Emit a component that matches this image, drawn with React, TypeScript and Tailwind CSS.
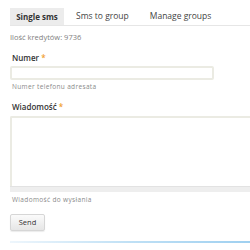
import React from "react";

export default function App() {
  const font = { fontFamily: '"Open Sans", "Noto Sans", "DejaVu Sans", sans-serif' };
  return (
    <div className="w-[250px] h-[250px] overflow-hidden bg-white text-[#444]" style={font}>
      <div className="pl-[10px] pt-[9px]">
        <div className="flex items-end border-b border-[#e6e6e6] h-[17px] whitespace-nowrap">
          <div className="h-[17px] w-[54px] bg-[#ececec] flex items-center justify-center text-[8px] font-bold text-[#333]">
            Single sms
          </div>
          <div className="h-[17px] pl-[12px] flex items-center text-[8.5px] text-[#444]">
            Sms to group
          </div>
          <div className="h-[17px] pl-[21px] flex items-center text-[8.5px] text-[#444]">
            Manage groups
          </div>
        </div>
        <div className="mt-[5px] text-[7.5px] leading-[12px] text-[#808080]">Ilość kredytów: 9736</div>

        <div className="mt-[9px] pl-[2px] text-[8px] leading-[11px] font-semibold text-[#333]">
          Numer <span className="text-[#f0a030]">*</span>
        </div>
        <div className="mt-[3px] w-[204px] h-[14px] border-2 border-[#ebebe3] rounded-[2px] bg-white"></div>
        <div className="mt-[2px] pl-[2px] text-[6.5px] leading-[10px] text-[#8a8a8a] tracking-[0.35px]">Numer telefonu adresata</div>

        <div className="mt-[9px] pl-[2px] text-[8px] leading-[11px] font-semibold text-[#333]">
          Wiadomość <span className="text-[#f0a030]">*</span>
        </div>
        <div className="mt-[4px] w-[245px] h-[70px] border-2 border-r-0 border-b-0 border-[#ebebe3] rounded-tl-[2px] bg-white"></div>
        <div className="w-[245px] h-[6px] bg-[#eeeeee] border-t border-[#e2e2e2]"></div>
        <div className="mt-[3px] pl-[2px] text-[6.5px] leading-[10px] text-[#8a8a8a] tracking-[0.35px]">Wiadomość do wysłania</div>

        <button className="block mt-[9px] w-[35px] h-[17px] rounded-[2px] border border-[#d6d6d6] bg-gradient-to-b from-[#fbfbfb] to-[#e6e6e6] text-[7.5px] text-[#333] shadow-[0_1px_1px_rgba(0,0,0,0.08)]" style={font}>
          Send
        </button>
        <div className="mt-[10px] h-[2px] w-[240px] bg-gradient-to-r from-[#eef6fc] via-[#bfe0f5] to-[#9fd0f0]"></div>
      </div>
    </div>
  );
}
